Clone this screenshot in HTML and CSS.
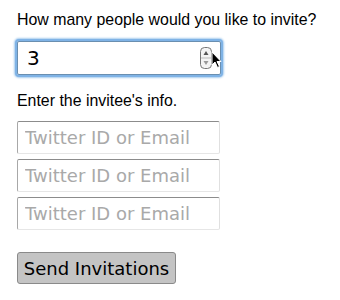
FILE: index.html
```html
<!DOCTYPE html>
<html>
<head>
<meta charset="utf-8">
<link rel="stylesheet" href="styles.css">
</head>
<body>
<form class="invite">
  <label class="q">How many people would you like to invite?</label>
  <div class="count">
    <span class="count-val">3</span>
    <span class="stepper">
      <svg width="12" height="22" viewBox="0 0 12 22">
        <rect x="0.5" y="0.5" width="11" height="21" rx="4" fill="#f4f4f4" stroke="#777"/>
        <line x1="1" y1="11" x2="11" y2="11" stroke="#bbb"/>
        <path d="M6 4 L8.5 8 L3.5 8 Z" fill="#555"/>
        <path d="M6 18 L8.5 14 L3.5 14 Z" fill="#999"/>
      </svg>
    </span>
    <svg class="cursor" width="12" height="18" viewBox="0 0 12 18">
      <path d="M1 1 L1 14 L4 11 L6.5 16.5 L8.5 15.5 L6 10.5 L10 10.5 Z" fill="#000" stroke="#fff" stroke-width="1"/>
    </svg>
  </div>
  <p class="sub">Enter the invitee's info.</p>
  <div class="fields">
    <input class="field" type="text" placeholder="Twitter ID or Email">
    <input class="field" type="text" placeholder="Twitter ID or Email">
    <input class="field" type="text" placeholder="Twitter ID or Email">
  </div>
  <button class="send" type="button">Send Invitations</button>
</form>
</body>
</html>
```
FILE: styles.css
```css
html, body {
  margin: 0;
  padding: 0;
  background: #fff;
}
.invite {
  display: flex;
  flex-direction: column;
  align-items: flex-start;
  padding: 10px 0 0 17px;
  font-family: "Liberation Sans", Arial, sans-serif;
  font-size: 15.9px;
  color: #000;
}
.q {
  display: block;
  line-height: 19px;
}
.count {
  position: relative;
  margin-top: 12px;
  width: 185px;
  height: 32px;
  border: 1px solid #6a8fb0;
  border-radius: 2px;
  box-shadow: 0 0 0 2px #7fb3e6, 0 0 2px 3px #a9cdee;
  display: flex;
  align-items: center;
  padding: 0 8px 0 9px;
  box-sizing: content-box;
  font-family: "DejaVu Sans", sans-serif;
  font-size: 20px;
}
.count-val {
  flex: 1;
  line-height: 1;
}
.stepper {
  display: flex;
}
.cursor {
  position: absolute;
  right: -3px;
  top: 9px;
}
.sub {
  margin: 16px 0 0 0;
  line-height: 19px;
}
.fields {
  display: flex;
  flex-direction: column;
  gap: 5px;
  margin-top: 11px;
}
.field {
  width: 203px;
  height: 33px;
  box-sizing: border-box;
  margin: 0;
  padding: 0 0 0 7px;
  border: 1px solid #a8a8a8;
  border-top-color: #8c8c8c;
  border-bottom-color: #e6e6e6;
  border-right-color: #e0e0e0;
  border-radius: 2px;
  font-family: "DejaVu Sans", sans-serif;
  font-size: 18px;
  background: #fff;
  outline: none;
}
.field::placeholder {
  color: #a9a9a9;
}
.send {
  margin-top: 22px;
  width: 159px;
  height: 32px;
  padding: 0;
  border: 1px solid #8a8a8a;
  border-radius: 3px;
  background: #c4c4c4;
  font-family: "DejaVu Sans", sans-serif;
  font-size: 18px;
  color: #000;
}
```
